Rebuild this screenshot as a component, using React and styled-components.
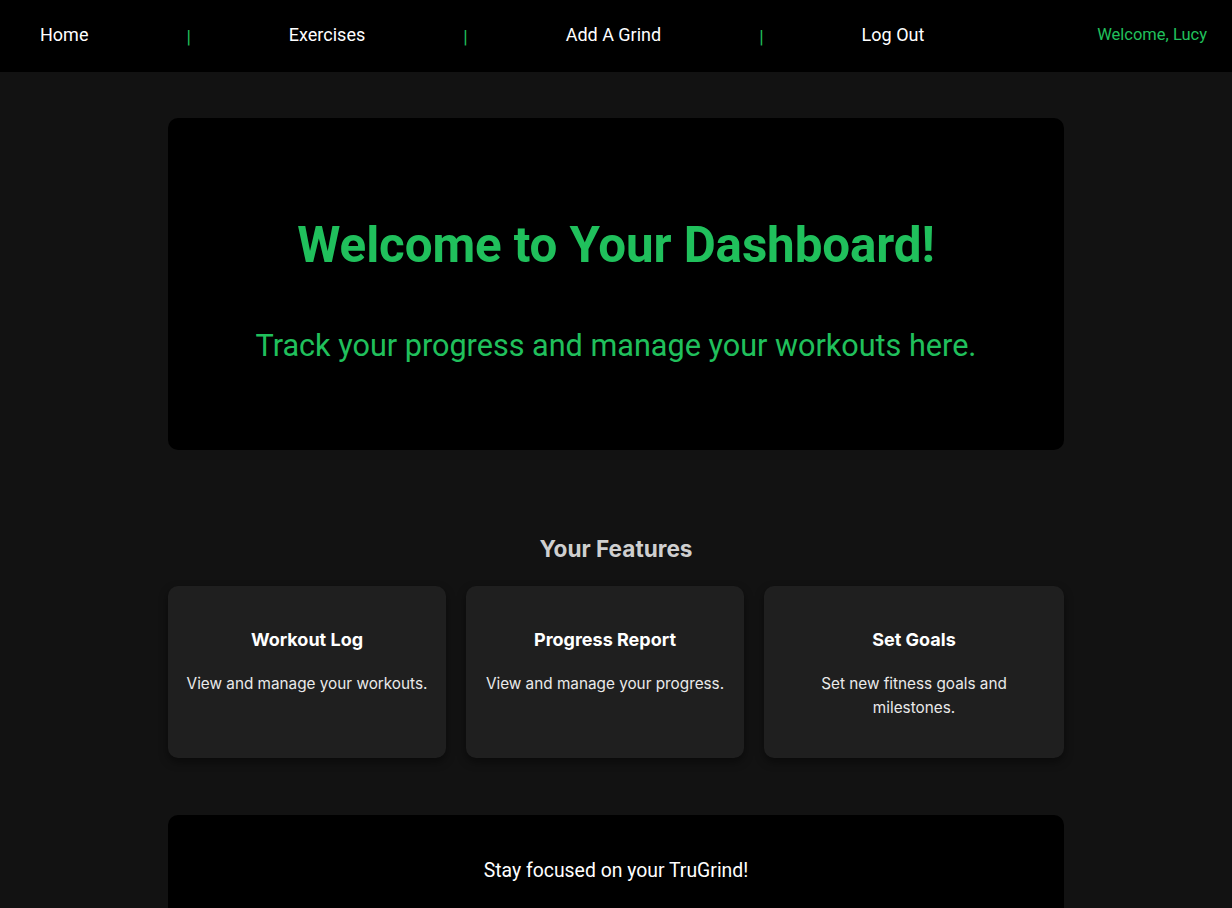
import React from "react";
import styled, { createGlobalStyle } from "styled-components";

const GlobalStyle = createGlobalStyle`
  html, body { margin: 0; padding: 0; background: #121212; }
  body { font-family: Roboto, "Liberation Sans", sans-serif; color: #fff; }
  * { box-sizing: border-box; }
`;

const GREEN = "#20c05c";

const NavBar = styled.nav`
  height: 72px;
  background: #000;
  display: flex;
  align-items: center;
  padding: 0 25px 3px 40px;
`;

const NavLinks = styled.div`
  display: flex;
  align-items: center;
  gap: 98px;
`;

const NavLink = styled.a`
  color: #fff;
  font-family: Roboto, sans-serif;
  font-size: 18px;
  text-decoration: none;
`;

const Separator = styled.span`
  color: ${GREEN};
  font-size: 18px;
  font-family: Roboto, sans-serif;
  position: relative;
  top: 2px;
`;

const WelcomeUser = styled.span`
  margin-left: auto;
  color: ${GREEN};
  font-family: Roboto, sans-serif;
  font-size: 16.5px;
`;

const Main = styled.main`
  width: 896px;
  margin: 0 auto;
  padding-top: 46px;
`;

const Hero = styled.section`
  background: #000;
  border-radius: 10px;
  padding: 98px 20px 85px;
  text-align: center;
`;

const HeroTitle = styled.h1`
  margin: 0;
  color: ${GREEN};
  font-family: Roboto, sans-serif;
  font-weight: 700;
  font-size: 49.3px;
  line-height: 58px;
  letter-spacing: -0.1px;
`;

const HeroSub = styled.p`
  margin: 53px 0 0;
  color: ${GREEN};
  font-family: Roboto, sans-serif;
  font-size: 30.6px;
  line-height: 38px;
`;

const Features = styled.section`
  margin-top: 84px;
`;

const FeaturesTitle = styled.h2`
  margin: 0 0 22px;
  text-align: center;
  color: #cfcfcf;
  font-family: Inter, sans-serif;
  font-weight: 700;
  font-size: 22.6px;
  line-height: 30px;
`;

const CardRow = styled.div`
  display: flex;
  gap: 20px;
`;

const Card = styled.div`
  flex: ${(p) => (p.$wide ? "0 0 300px" : "1 1 0")};
  background: #1f1f1f;
  border-radius: 10px;
  box-shadow: 0 4px 10px rgba(0, 0, 0, 0.45);
  padding: 42px 16px 38px;
  text-align: center;
  font-family: Inter, sans-serif;
`;

const CardTitle = styled.h3`
  margin: 0 0 20px;
  font-size: 18px;
  line-height: 24px;
  font-weight: 700;
  color: #fff;
`;

const CardText = styled.p`
  margin: 0;
  font-size: 15.3px;
  line-height: 24px;
  color: #eaeaea;
`;

const Footer = styled.section`
  margin-top: 57px;
  background: #000;
  border-radius: 10px;
  padding: 44px 20px 60px;
  text-align: center;
  font-family: Roboto, sans-serif;
  font-size: 19.4px;
  line-height: 24px;
  color: #fff;
`;

const features = [
  { title: "Workout Log", text: "View and manage your workouts." },
  { title: "Progress Report", text: "View and manage your progress." },
  { title: "Set Goals", text: "Set new fitness goals and milestones.", wide: true },
];

const links = ["Home", "Exercises", "Add A Grind", "Log Out"];

export default function App() {
  return (
    <>
      <GlobalStyle />
      <NavBar>
        <NavLinks>
          {links.map((l, i) => (
            <React.Fragment key={l}>
              {i > 0 && <Separator>|</Separator>}
              <NavLink href="#">{l}</NavLink>
            </React.Fragment>
          ))}
        </NavLinks>
        <WelcomeUser>Welcome, Lucy</WelcomeUser>
      </NavBar>
      <Main>
        <Hero>
          <HeroTitle>Welcome to Your Dashboard!</HeroTitle>
          <HeroSub>Track your progress and manage your workouts here.</HeroSub>
        </Hero>
        <Features>
          <FeaturesTitle>Your Features</FeaturesTitle>
          <CardRow>
            {features.map((f) => (
              <Card key={f.title} $wide={f.wide}>
                <CardTitle>{f.title}</CardTitle>
                <CardText>{f.text}</CardText>
              </Card>
            ))}
          </CardRow>
        </Features>
        <Footer>Stay focused on your TruGrind!</Footer>
      </Main>
    </>
  );
}
